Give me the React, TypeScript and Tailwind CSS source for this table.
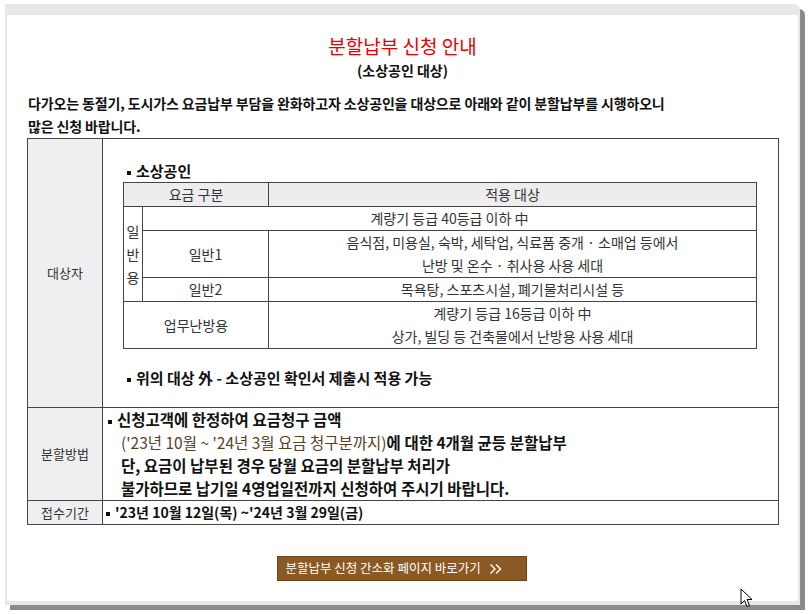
import React from "react";

const FONT = "font-['Noto_Sans_CJK_KR','Noto_Sans',sans-serif]";

function Bullet() {
  return (
    <span className="mr-[5px] inline-block h-[4px] w-[4px] bg-current align-middle" />
  );
}

function Chevrons() {
  return (
    <svg width="13" height="12" viewBox="0 0 13 12" fill="none" aria-hidden>
      <path d="M1.5 1.5 L6 6 L1.5 10.5" stroke="white" strokeWidth="1.4" />
      <path d="M7 1.5 L11.5 6 L7 10.5" stroke="white" strokeWidth="1.4" />
    </svg>
  );
}

function Cursor() {
  return (
    <svg
      width="14"
      height="20"
      viewBox="0 0 14 20"
      className="absolute left-[740px] top-[588px]"
      aria-hidden
    >
      <path
        d="M1 1 L1 16 L4.5 12.5 L7 18.5 L9.5 17.5 L7 11.5 L12 11.5 Z"
        fill="white"
        stroke="black"
        strokeWidth="1"
        strokeLinejoin="round"
      />
    </svg>
  );
}

function TargetTable() {
  const cell = "border border-[#444] text-center align-middle";
  return (
    <table className="w-[634px] table-fixed border-collapse text-[14px] text-[#333]">
      <colgroup>
        <col className="w-[19px]" />
        <col className="w-[126px]" />
        <col />
      </colgroup>
      <tbody>
        <tr className="h-[24px] bg-[#ededef]">
          <td colSpan={2} className={cell}>
            요금 구분
          </td>
          <td className={cell}>적용 대상</td>
        </tr>
        <tr className="h-[24px]">
          <td rowSpan={3} className={`${cell} leading-[23px]`}>
            일<br />반<br />용
          </td>
          <td colSpan={2} className={cell}>
            계량기 등급 40등급 이하 中
          </td>
        </tr>
        <tr className="h-[47px]">
          <td className={cell}>일반1</td>
          <td className={`${cell} leading-[23px]`}>
            음식점, 미용실, 숙박, 세탁업, 식료품 중개 · 소매업 등에서
            <br />
            난방 및 온수 · 취사용 사용 세대
          </td>
        </tr>
        <tr className="h-[24px]">
          <td className={cell}>일반2</td>
          <td className={cell}>목욕탕, 스포츠시설, 폐기물처리시설 등</td>
        </tr>
        <tr className="h-[47px]">
          <td colSpan={2} className={cell}>
            업무난방용
          </td>
          <td className={`${cell} leading-[23px]`}>
            계량기 등급 16등급 이하 中
            <br />
            상가, 빌딩 등 건축물에서 난방용 사용 세대
          </td>
        </tr>
      </tbody>
    </table>
  );
}

export default function App() {
  const label =
    "border border-[#444] bg-[#efeff1] text-center align-middle text-[13px] font-normal text-[#333]";
  const body = "border border-[#444] align-top";
  return (
    <div className={`relative h-[614px] w-[808px] bg-white ${FONT}`}>
      <div className="absolute left-[5px] top-[4px] h-[601px] w-[795px] rounded-tr-[6px] bg-[#e8e8eb] px-[2px] pb-[4px] pt-[11px] shadow-[5px_5px_0_#8a8a8a]">
        <div className="h-full w-full bg-white text-[#111]">
          <div className="pt-[18px]">
            <h1 className="text-center text-[19px] leading-[26px] text-[#e60000]">
              분할납부 신청 안내
            </h1>
            <p className="mt-[1px] text-center text-[14px] font-bold leading-[20px]">
              (소상공인 대상)
            </p>
            <p className="ml-[21px] mt-[12px] text-[14px] font-bold leading-[23px] tracking-[-0.01em]">
              다가오는 동절기, 도시가스 요금납부 부담을 완화하고자 소상공인을
              대상으로 아래와 같이 분할납부를 시행하오니
              <br />
              많은 신청 바랍니다.
            </p>

            <table className="ml-[20px] w-[752px] table-fixed border-collapse">
              <colgroup>
                <col className="w-[75px]" />
                <col />
              </colgroup>
              <tbody>
                <tr className="h-[269px]">
                  <th className={label}>대상자</th>
                  <td className={`${body} px-[20px]`}>
                    <div className="mt-[22px] h-[20px] pl-[4px] text-[15px] font-bold leading-[20px]">
                      <Bullet />
                      소상공인
                    </div>
                    <div className="mt-[1px]">
                      <TargetTable />
                    </div>
                    <div className="mt-[19px] h-[20px] pl-[4px] text-[15px] font-bold leading-[20px]">
                      <Bullet />
                      위의 대상 外 - 소상공인 확인서 제출시 적용 가능
                    </div>
                  </td>
                </tr>
                <tr className="h-[93px]">
                  <th className={label}>분할방법</th>
                  <td className={`${body} pl-[5px] text-[15.5px] leading-[23px]`}>
                    <div className="font-bold">
                      <Bullet />
                      신청고객에 한정하여 요금청구 금액
                    </div>
                    <div className="pl-[13px]">
                      <span className="text-[#5c3d1e]">
                        ('23년 10월 ~ '24년 3월 요금 청구분까지)
                      </span>
                      <span className="font-bold">에 대한 4개월 균등 분할납부</span>
                    </div>
                    <div className="pl-[13px] font-bold">
                      단, 요금이 납부된 경우 당월 요금의 분할납부 처리가
                    </div>
                    <div className="pl-[13px] font-bold">
                      불가하므로 납기일 4영업일전까지 신청하여 주시기 바랍니다.
                    </div>
                  </td>
                </tr>
                <tr className="h-[24px]">
                  <th className={label}>접수기간</th>
                  <td className="border border-[#444] pl-[3px] align-middle text-[14px] font-bold">
                    <Bullet />
                    '23년 10월 12일(목) ~'24년 3월 29일(금)
                  </td>
                </tr>
              </tbody>
            </table>

            <div className="mt-[31px] flex justify-center pr-[2px]">
              <button className="flex h-[25px] w-[250px] items-center justify-start gap-[8px] border border-[#6e4416] bg-[#8b5a24] pl-[8px] text-[12.5px] text-white">
                <span>분할납부 신청 간소화 페이지 바로가기</span>
                <Chevrons />
              </button>
            </div>
          </div>
        </div>
      </div>
      <Cursor />
    </div>
  );
}
